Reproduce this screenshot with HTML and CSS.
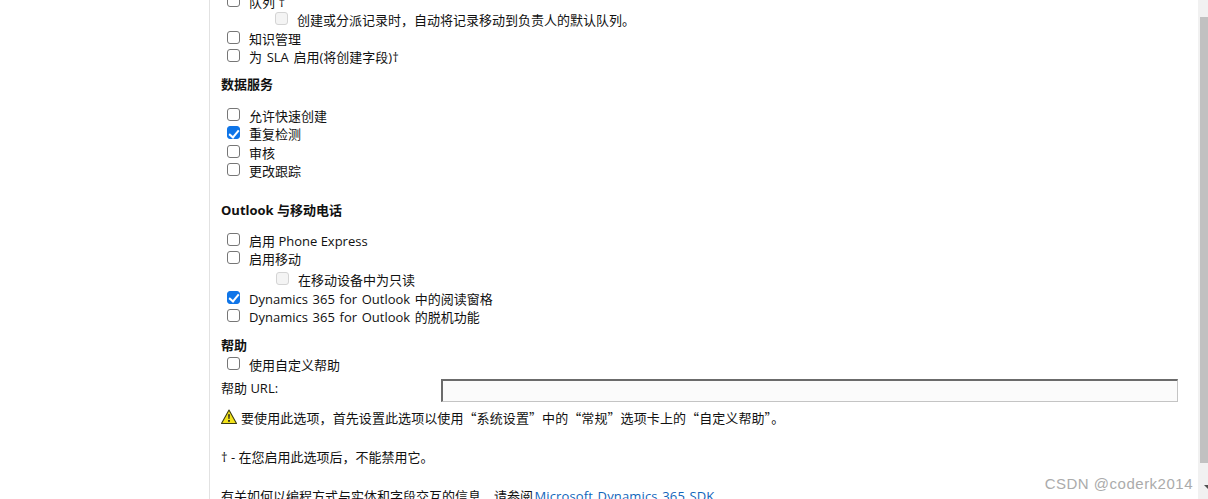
FILE: index.html
```html
<!DOCTYPE html>
<html lang="zh-CN">
<head>
<meta charset="utf-8">
<title>实体设置</title>
<link rel="stylesheet" href="styles.css">
</head>
<body>
<div class="viewport">
  <main class="panel">
    <section class="group first">
      <label class="row"><input type="checkbox" class="box"><span>队列 †</span></label>
      <label class="row sub"><input type="checkbox" class="box" disabled><span>创建或分派记录时，自动将记录移动到负责人的默认队列。</span></label>
      <label class="row"><input type="checkbox" class="box"><span>知识管理</span></label>
      <label class="row"><input type="checkbox" class="box"><span class="wide">为 SLA 启用(将创建字段)†</span></label>
    </section>
    <h2 class="heading data">数据服务</h2>
    <section class="group">
      <label class="row"><input type="checkbox" class="box"><span>允许快速创建</span></label>
      <label class="row"><input type="checkbox" class="box" checked><span>重复检测</span></label>
      <label class="row"><input type="checkbox" class="box"><span>审核</span></label>
      <label class="row"><input type="checkbox" class="box"><span>更改跟踪</span></label>
    </section>
    <h2 class="heading outlook">Outlook 与移动电话</h2>
    <section class="group">
      <label class="row"><input type="checkbox" class="box"><span>启用 Phone Express</span></label>
      <label class="row"><input type="checkbox" class="box"><span>启用移动</span></label>
      <label class="row sub tall"><input type="checkbox" class="box" disabled><span>在移动设备中为只读</span></label>
      <label class="row"><input type="checkbox" class="box" checked><span class="wide">Dynamics 365 for Outlook 中的阅读窗格</span></label>
      <label class="row"><input type="checkbox" class="box"><span class="wide">Dynamics 365 for Outlook 的脱机功能</span></label>
    </section>
    <h2 class="heading help">帮助</h2>
    <section class="group">
      <label class="row"><input type="checkbox" class="box"><span>使用自定义帮助</span></label>
    </section>
    <div class="url-row">
      <label class="url-label" for="help-url">帮助 URL:</label>
      <input id="help-url" class="url-input" type="text">
    </div>
    <p class="warning">
      <svg class="warn-icon" viewBox="0 0 16 16" width="16" height="16" aria-hidden="true">
        <path d="M8 1 L15.5 14.5 H0.5 Z" fill="#f2e21a" stroke="#3c3c10" stroke-width="1.1" stroke-linejoin="round"/>
        <path d="M7.1 5.2 H8.9 L8.5 10 H7.5 Z" fill="#222"/>
        <rect x="7.1" y="11" width="1.8" height="1.8" fill="#222"/>
      </svg>
      <span class="warn-text">要使用此选项，首先设置此选项以使用“系统设置”中的“常规”选项卡上的“自定义帮助”。</span>
    </p>
    <p class="note">† - 在您启用此选项后，不能禁用它。</p>
    <p class="more">有关如何以编程方式与实体和字段交互的信息，请参阅 <a href="#">Microsoft Dynamics 365 SDK</a></p>
  </main>
  <div class="scrollbar"><div class="thumb"></div><div class="arrow"></div></div>
  <div class="watermark">CSDN @coderk2014</div>
</div>
</body>
</html>
```
FILE: styles.css
```css
* { box-sizing: border-box; }
html, body { margin: 0; height: 100%; overflow: hidden; background: #fff; }
body {
  font-family: "Open Sans", "Noto Sans CJK SC", sans-serif;
  font-size: 13px;
  color: #111;
}
.viewport {
  position: relative;
  display: flex;
  justify-content: space-between;
  height: 499px;
  overflow: hidden;
}
.panel {
  width: 989px;
  height: 530px;
  margin-left: 209px;
  margin-top: -7.3px;
  border-left: 1px solid #e2e2e2;
  padding-left: 11px;
  flex: none;
}
.group { display: flex; flex-direction: column; }
.row { display: flex; align-items: center; height: 18.4px; padding-left: 6px; line-height: 18px; white-space: nowrap; }
.row.sub { padding-left: 54px; }
.row.tall { height: 21.5px; padding-top: 2px; padding-left: 55px; }
.wide { word-spacing: 1.3px; }
.box {
  appearance: none;
  width: 13px;
  height: 13px;
  margin: -3px 9px 0 0;
  flex: none;
  border: 1.3px solid #767676;
  border-radius: 3px;
  background: #fff;
  position: relative;
}
.box:disabled { border-color: #d4d4d4; background: #f4f4f4; }
.box:checked { background: #0f75e8; border-color: #0f75e8; }
.box:checked::after {
  content: "";
  position: absolute;
  left: 3px;
  top: 0.4px;
  width: 4px;
  height: 8px;
  border: solid #fff;
  border-width: 0 2px 2px 0;
  transform: rotate(40deg);
}
.heading { margin: 0; font-size: 13px; font-weight: 700; color: #111; line-height: 18px; }
.heading.data { margin: 9px 0 13.5px; }
.heading.outlook { margin: 20.5px 0 12.5px; }
.heading.help { margin: 10px 0 1.5px; }
.url-row { display: flex; align-items: center; height: 24px; margin-top: 4.5px; }
.url-label { width: 220px; flex: none; padding-bottom: 6px; }
.url-input {
  width: 737px;
  height: 23px;
  border: 1px solid #c4c4c4;
  border-top: 2px solid #6b6b6b;
  border-left: 2px solid #6b6b6b;
  background: #fbfbfb;
  padding: 0;
}
.warning { display: flex; align-items: center; gap: 4px; margin: 3px 0 0; height: 24px; }
.warn-text { font-family: "Noto Sans CJK SC", sans-serif; letter-spacing: 0.09px; }
.warn-icon { flex: none; margin-top: -2px; }
.note { margin: 18.5px 0 0; line-height: 18px; }
.more { margin: 21px 0 0; line-height: 18px; white-space: nowrap; word-spacing: -2px; }
.more a { color: #1166bb; text-decoration: none; word-spacing: 1px; letter-spacing: 0.15px; }
.scrollbar {
  width: 10px;
  flex: none;
  background: #f1f1f1;
  display: flex;
  flex-direction: column;
  align-items: flex-end;
  padding-top: 17px;
}
.thumb { width: 8px; height: 446px; background: #c1c1c1; }
.arrow {
  margin: 22px 0 0;
  width: 0;
  height: 0;
  border-left: 4px solid transparent;
  border-right: 0 solid transparent;
  border-top: 4px solid #505050;
}
.watermark {
  position: absolute;
  right: 15px;
  top: 475px;
  font-family: "Liberation Sans", sans-serif;
  font-size: 15px;
  letter-spacing: 0.5px;
  color: #ababab;
}
```
